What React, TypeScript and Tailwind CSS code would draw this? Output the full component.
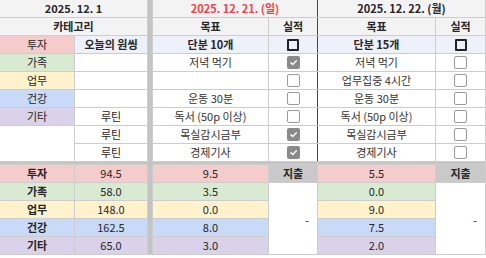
import { Fragment } from "react";
import type { ReactNode } from "react";

const PINK = "bg-[#f4cccc]";
const GREEN = "bg-[#d9ead3]";
const YELLOW = "bg-[#fff2cc]";
const BLUE = "bg-[#c9daf8]";
const PURPLE = "bg-[#d9d2e9]";
const HEAD = "bg-[#f3f3f3]";
const LAVENDER = "bg-[#eef0fa]";

type Box = "bold" | "checked" | "empty";

const Cell = ({ className = "", children }: { className?: string; children?: ReactNode }) => (
  <div className={`flex items-center justify-center overflow-hidden whitespace-nowrap ${className}`}>
    {children}
  </div>
);

const CheckBox = ({ kind }: { kind: Box }) => {
  if (kind === "bold") {
    return <div className="h-[12px] w-[12px] rounded-[1px] border-2 border-[#222]" />;
  }
  if (kind === "checked") {
    return (
      <div className="flex h-[13px] w-[13px] items-center justify-center rounded-[2px] bg-[#8a8a8a]">
        <svg width="9" height="9" viewBox="0 0 10 10" fill="none">
          <path d="M2 5.2 L4.2 7.2 L8.2 3" stroke="white" strokeWidth="1.4" strokeLinecap="round" strokeLinejoin="round" />
        </svg>
      </div>
    );
  }
  return <div className="h-[13px] w-[13px] rounded-[2px] border-[1.5px] border-[#9a9a9a] bg-white" />;
};

const goals2: [string, Box][] = [
  ["저녁 먹기", "checked"],
  ["", "empty"],
  ["운동 30분", "empty"],
  ["독서 (50p 이상)", "empty"],
  ["목실감시금부", "checked"],
  ["경제기사", "checked"],
];

const goals3: [string, Box][] = [
  ["저녁 먹기", "empty"],
  ["업무집중 4시간", "empty"],
  ["운동 30분", "empty"],
  ["독서 (50p 이상)", "empty"],
  ["목실감시금부", "empty"],
  ["경제기사", "empty"],
];

// left block cells for the six goal rows (rows 8-9 share a merged first cell)
const leftRows: ReactNode[] = [
  <>
    <Cell className={GREEN}>가족</Cell>
    <Cell className="bg-white" />
  </>,
  <>
    <Cell className={YELLOW}>업무</Cell>
    <Cell className="bg-white" />
  </>,
  <>
    <Cell className={BLUE}>건강</Cell>
    <Cell className="bg-white" />
  </>,
  <>
    <Cell className={PURPLE}>기타</Cell>
    <Cell className="bg-white">루틴</Cell>
  </>,
  <>
    <Cell className="row-span-2 bg-white" />
    <Cell className="bg-white">루틴</Cell>
  </>,
  <>
    <Cell className="bg-white">루틴</Cell>
  </>,
];

const summary = [
  { label: "투자", bg: PINK, total: "94.5", d1: "9.5", d2: "5.5" },
  { label: "가족", bg: GREEN, total: "58.0", d1: "3.5", d2: "0.0" },
  { label: "업무", bg: YELLOW, total: "148.0", d1: "0.0", d2: "9.0" },
  { label: "건강", bg: BLUE, total: "162.5", d1: "8.0", d2: "7.5" },
  { label: "기타", bg: PURPLE, total: "65.0", d1: "3.0", d2: "2.0" },
];

export default function App() {
  return (
    <div className="h-[258px] w-[486px] bg-white font-['Noto_Sans_CJK_KR','Malgun_Gothic',sans-serif] text-[11px] leading-none text-[#262626]">
      <div className="grid w-[486px] grid-cols-[74px_72px_4px_115px_48px_117px_49px] grid-rows-[repeat(9,17px)_2px_repeat(5,17px)] gap-px bg-[#cdcdcd] pr-px pb-px">
        {/* separators */}
        <div className="col-start-3 row-span-15 row-start-1 bg-[#c4c4c4]" />
        <div className="col-span-7 col-start-1 row-start-10 bg-[#c4c4c4]" />

        {/* header row */}
        <Cell className={`col-span-2 font-bold ${HEAD}`}>2025. 12. 1</Cell>
        <Cell className={`col-span-2 font-bold text-[#ee4444] ${HEAD}`}>2025. 12. 21. (일)</Cell>
        <Cell className={`col-span-2 font-bold shadow-[-1px_0_0_#444] ${HEAD}`}>2025. 12. 22. (월)</Cell>

        {/* column titles */}
        <Cell className={`col-span-2 font-bold ${HEAD}`}>카테고리</Cell>
        <Cell className={`font-bold ${HEAD}`}>목표</Cell>
        <Cell className={`font-bold ${HEAD}`}>실적</Cell>
        <Cell className={`font-bold shadow-[-1px_0_0_#444] ${HEAD}`}>목표</Cell>
        <Cell className={`font-bold ${HEAD}`}>실적</Cell>

        {/* one thing row */}
        <Cell className={PINK}>투자</Cell>
        <Cell className={`font-bold ${LAVENDER}`}>오늘의 원씽</Cell>
        <Cell className={`font-bold ${LAVENDER}`}>단분 10개</Cell>
        <Cell className={LAVENDER}>
          <CheckBox kind="bold" />
        </Cell>
        <Cell className={`font-bold shadow-[-1px_0_0_#444] ${LAVENDER}`}>단분 15개</Cell>
        <Cell className={LAVENDER}>
          <CheckBox kind="bold" />
        </Cell>

        {/* goal rows */}
        {goals2.map((g, i) => (
          <Fragment key={i}>
            {leftRows[i]}
            <Cell className="bg-white text-[#333]">{g[0]}</Cell>
            <Cell className="bg-white">
              <CheckBox kind={g[1]} />
            </Cell>
            <Cell className="bg-white text-[#333] shadow-[-1px_0_0_#444]">{goals3[i][0]}</Cell>
            <Cell className="bg-white">
              <CheckBox kind={goals3[i][1]} />
            </Cell>
          </Fragment>
        ))}

        {/* summary rows */}
        {summary.map((s, i) => (
          <Fragment key={s.label}>
            <Cell className={`font-bold ${s.bg}`}>{s.label}</Cell>
            <Cell className={s.bg}>{s.total}</Cell>
            <Cell className={s.bg}>{s.d1}</Cell>
            {i === 0 && <Cell className="bg-[#c9c9c9] font-bold">지출</Cell>}
            {i === 1 && <Cell className="row-span-4 justify-end bg-white pr-2 pt-[3px]">-</Cell>}
            <Cell className={s.bg}>{s.d2}</Cell>
            {i === 0 && <Cell className="bg-[#c9c9c9] font-bold">지출</Cell>}
            {i === 1 && <Cell className="row-span-4 justify-end bg-white pr-2 pt-[3px]">-</Cell>}
          </Fragment>
        ))}
      </div>
    </div>
  );
}
